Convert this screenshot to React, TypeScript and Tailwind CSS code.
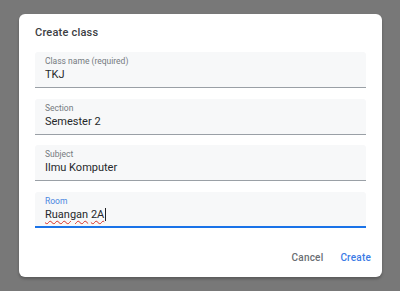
import type { ReactNode } from 'react';

type FieldProps = {
  label: string;
  value: ReactNode;
  focused?: boolean;
};

function Field({ label, value, focused = false }: FieldProps) {
  return (
    <div
      className={
        focused
          ? 'h-[36px] rounded-t-[3px] border-b-2 border-[#1a73e8] bg-[#f7f8f9] px-[10px] pt-[4px]'
          : 'h-[36px] rounded-t-[3px] border-b border-[#9aa0a6] bg-[#f7f8f9] px-[10px] pt-[4px]'
      }
    >
      <div className={focused ? 'text-[8.5px] leading-[11px] text-[#4a86e0]' : 'text-[8.5px] leading-[11px] text-[#757a7f]'}>
        {label}
      </div>
      <div className="text-[11px] leading-[15px] text-[#26282b]">{value}</div>
    </div>
  );
}

export default function App() {
  return (
    <div className="h-[291px] w-[400px] overflow-hidden bg-[#787878] pt-[14px] pl-[19px] font-['Roboto',sans-serif]">
      <div className="flex h-[263px] w-[363px] flex-col rounded-[6px] bg-white px-4 pt-[11px] shadow-[0_2px_3px_rgba(0,0,0,0.25)]">
        <h2 className="text-[11px] font-medium leading-4 tracking-[0.2px] text-[#3c4043]">Create class</h2>
        <div className="mt-[11px] flex flex-col gap-[10.5px]">
          <Field label="Class name (required)" value="TKJ" />
          <Field label="Section" value="Semester 2" />
          <Field label="Subject" value="Ilmu Komputer" />
          <Field
            label="Room"
            focused
            value={
              <span className="inline-flex items-center">
                <span className="underline decoration-[#d93025] decoration-wavy decoration-[0.5px] underline-offset-[2px]">Ruangan</span>
                <span>&nbsp;</span>
                <span className="underline decoration-[#d93025] decoration-wavy decoration-[0.5px] underline-offset-[2px]">2A</span>
                <span className="ml-px inline-block h-[13px] w-px bg-[#202124]" />
              </span>
            }
          />
        </div>
        <div className="mt-auto mb-[11px] flex justify-end gap-[17px] text-[10px] font-medium leading-4 tracking-[0.2px]">
          <button type="button" className="text-[#6a6e73]">Cancel</button>
          <button type="button" className="mr-[-5px] text-[#3b7be6]">Create</button>
        </div>
      </div>
    </div>
  );
}
